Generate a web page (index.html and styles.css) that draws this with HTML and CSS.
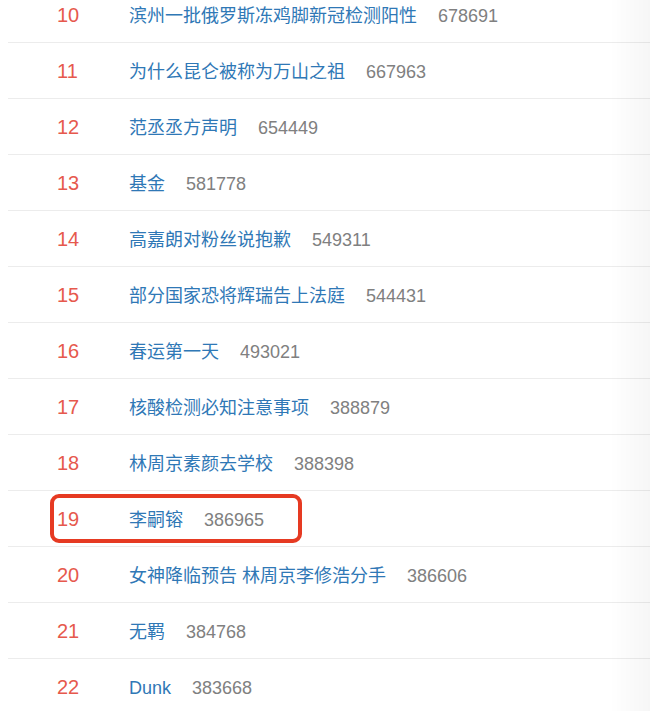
FILE: index.html
```html
<!doctype html>
<html lang="zh-CN">
  <head>
    <meta charset="utf-8">
    <meta name="viewport" content="width=device-width, initial-scale=1.0">
    <title>热搜榜</title>
    <link rel="stylesheet" href="styles.css">
  </head>
  <body>
    <ul class="rank-list">
      <li class="rank-item"><span class="rank-num">10</span><a class="rank-title" href="#">滨州一批俄罗斯冻鸡脚新冠检测阳性</a><span class="rank-count">678691</span></li>
      <li class="rank-item"><span class="rank-num">11</span><a class="rank-title" href="#">为什么昆仑被称为万山之祖</a><span class="rank-count">667963</span></li>
      <li class="rank-item"><span class="rank-num">12</span><a class="rank-title" href="#">范丞丞方声明</a><span class="rank-count">654449</span></li>
      <li class="rank-item"><span class="rank-num">13</span><a class="rank-title" href="#">基金</a><span class="rank-count">581778</span></li>
      <li class="rank-item"><span class="rank-num">14</span><a class="rank-title" href="#">高嘉朗对粉丝说抱歉</a><span class="rank-count">549311</span></li>
      <li class="rank-item"><span class="rank-num">15</span><a class="rank-title" href="#">部分国家恐将辉瑞告上法庭</a><span class="rank-count">544431</span></li>
      <li class="rank-item"><span class="rank-num">16</span><a class="rank-title" href="#">春运第一天</a><span class="rank-count">493021</span></li>
      <li class="rank-item"><span class="rank-num">17</span><a class="rank-title" href="#">核酸检测必知注意事项</a><span class="rank-count">388879</span></li>
      <li class="rank-item"><span class="rank-num">18</span><a class="rank-title" href="#">林周京素颜去学校</a><span class="rank-count">388398</span></li>
      <li class="rank-item marked"><span class="rank-num">19</span><a class="rank-title" href="#">李嗣镕</a><span class="rank-count">386965</span></li>
      <li class="rank-item"><span class="rank-num">20</span><a class="rank-title" href="#">女神降临预告 林周京李修浩分手</a><span class="rank-count">386606</span></li>
      <li class="rank-item"><span class="rank-num">21</span><a class="rank-title" href="#">无羁</a><span class="rank-count">384768</span></li>
      <li class="rank-item"><span class="rank-num">22</span><a class="rank-title" href="#">Dunk</a><span class="rank-count">383668</span></li>
    </ul>
    <div class="edge-shade"></div>
  </body>
</html>
```

FILE: styles.css
```css
*,
*::after {
  margin: 0;
  padding: 0;
  box-sizing: border-box;
}

body {
  background: #fff;
  font-family: "Liberation Sans", "Noto Sans CJK SC", sans-serif;
  overflow: hidden;
}

.rank-list {
  list-style: none;
  margin-top: -13px;
  padding-left: 8px;
}

.rank-item {
  position: relative;
  display: flex;
  align-items: baseline;
  height: 56px;
  line-height: 57px;
  border-bottom: 1px solid #ececec;
}

.rank-num {
  width: 121px;
  padding-left: 49px;
  font-size: 20px;
  color: #e6594d;
}

.rank-title {
  font-size: 18px;
  color: #2f78b6;
  text-decoration: none;
}

.rank-count {
  margin-left: 21px;
  font-size: 18px;
  color: #808080;
}

/* red mark drawn over row 19 */
.marked::after {
  content: "";
  position: absolute;
  left: 42px;
  top: 3px;
  width: 252px;
  height: 49px;
  border: 4px solid #e63a22;
  border-radius: 9px;
}

.edge-shade {
  position: fixed;
  top: 0;
  right: 0;
  width: 40px;
  height: 100%;
  background: linear-gradient(to right, rgba(0, 0, 0, 0), rgba(0, 0, 0, 0.035));
  pointer-events: none;
}
```
